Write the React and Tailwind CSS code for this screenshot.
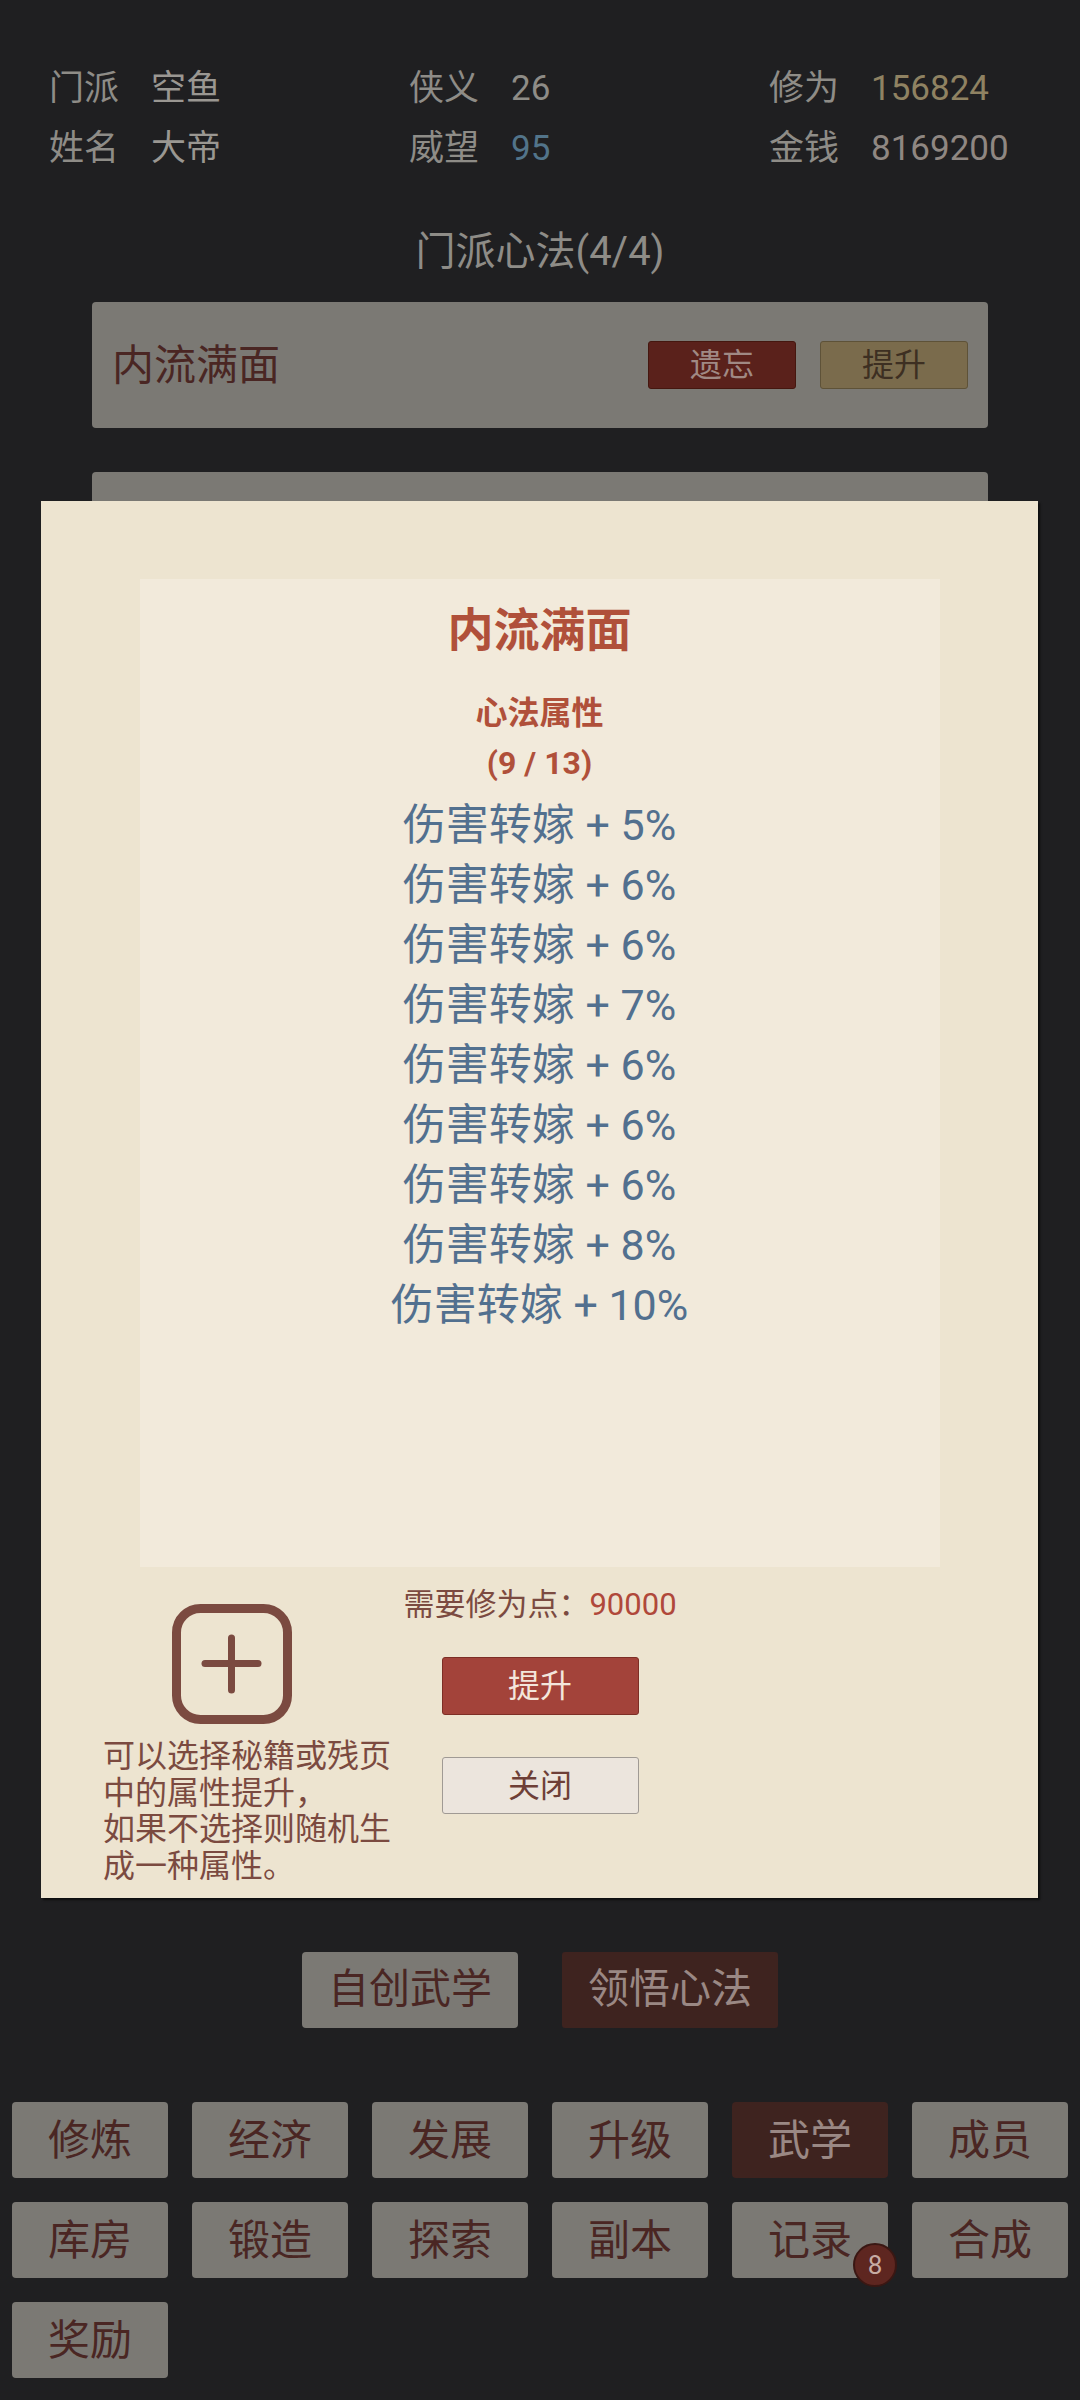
import React from "react";

const attrs = ["5%", "6%", "6%", "7%", "6%", "6%", "6%", "8%", "10%"];
const nav = [
  "修炼", "经济", "发展", "升级", "武学", "成员",
  "库房", "锻造", "探索", "副本", "记录", "合成",
  "奖励",
];

function InfoItem({ label, value, valueClass }) {
  return (
    <div className="flex w-[360px] shrink-0 items-center gap-[32px]">
      <span className="text-[#8e8c87]">{label}</span>
      <span className={valueClass}>{value}</span>
    </div>
  );
}

function Card({ name }) {
  return (
    <div className="flex h-[126px] w-[896px] shrink-0 items-center justify-between rounded-[4px] bg-[#7b7974] pl-[20px] pr-[20px]">
      <span className="text-[42px] text-[#4a2623]">{name}</span>
      <div className="flex gap-[24px]">
        <div className="flex h-[48px] w-[148px] items-center justify-center rounded-[3px] border border-[#45170f] bg-[#5a211b] text-[32px] text-[#a08984]">
          遗忘
        </div>
        <div className="flex h-[48px] w-[148px] items-center justify-center rounded-[3px] border border-[#5e5238] bg-[#7a6b4c] text-[32px] text-[#3d2f22]">
          提升
        </div>
      </div>
    </div>
  );
}

export default function App() {
  return (
    <div className="relative h-[2400px] w-[1080px] overflow-hidden bg-[#1f1f21] font-['Roboto','Noto_Sans_CJK_SC',sans-serif]">
      {/* header info */}
      <div className="pl-[49px] pt-[59px] text-[35px] leading-[60px]">
        <div className="flex">
          <InfoItem label="门派" value="空鱼" valueClass="text-[#9a9792]" />
          <InfoItem label="侠义" value="26" valueClass="text-[#8e8c87]" />
          <InfoItem label="修为" value="156824" valueClass="text-[#8f8262]" />
        </div>
        <div className="flex">
          <InfoItem label="姓名" value="大帝" valueClass="text-[#9a9792]" />
          <InfoItem label="威望" value="95" valueClass="text-[#52748a]" />
          <InfoItem label="金钱" value="8169200" valueClass="text-[#8f8782]" />
        </div>
      </div>

      <div className="mt-[43px] text-center text-[40px] leading-[60px] text-[#8e8c87]">
        门派心法(4/4)
      </div>

      {/* list */}
      <div className="mt-[20px] flex h-[1650px] flex-col items-center gap-[44px] overflow-hidden">
        <Card name="内流满面" />
        <Card name="" />
        <Card name="" />
        <Card name="" />
      </div>

      {/* bottom action buttons */}
      <div className="flex justify-center gap-[44px]">
        <div className="flex h-[76px] w-[216px] items-center justify-center rounded-[4px] bg-[#7b7974] text-[41px] text-[#4a2623]">
          自创武学
        </div>
        <div className="flex h-[76px] w-[216px] items-center justify-center rounded-[3px] bg-[#3e231f] text-[41px] text-[#9a8884]">
          领悟心法
        </div>
      </div>

      {/* nav grid */}
      <div className="mt-[74px] grid grid-cols-[repeat(6,156px)] gap-x-[24px] gap-y-[24px] px-[12px]">
        {nav.map((n) => (
          <div
            key={n}
            className={
              n === "武学"
                ? "relative flex h-[76px] items-center justify-center rounded-[4px] bg-[#3e231f] text-[42px] text-[#9a8884]"
                : "relative flex h-[76px] items-center justify-center rounded-[4px] bg-[#7b7974] text-[42px] text-[#4a2623]"
            }
          >
            {n}
            {n === "记录" && (
              <div className="absolute left-[121px] top-[41px] flex h-[44px] w-[44px] items-center justify-center rounded-full border-2 border-[#3a1713] bg-[#5e2620] text-[26px] text-[#c7aba3]">
                8
              </div>
            )}
          </div>
        ))}
      </div>

      {/* modal */}
      <div className="absolute left-[41px] top-[501px] h-[1397px] w-[997px] bg-[#ede4d0] pt-[78px] shadow-[2px_2px_2px_rgba(0,0,0,0.6)]">
        <div className="mx-auto flex h-[988px] w-[800px] flex-col items-center bg-[#f2eadb] pt-[21px]">
          <div className="text-[46px] font-bold leading-[60px] text-[#b0503a]">内流满面</div>
          <div className="mt-[28px] text-[32px] font-bold leading-[50px] text-[#b0503a]">心法属性</div>
          <div className="text-[32px] font-bold leading-[50px] text-[#b0503a]">(9 / 13)</div>
          <div className="mt-[7px] flex flex-col items-center">
            {attrs.map((a, i) => (
              <div key={i} className="whitespace-pre text-[43px] leading-[60px] text-[#52708f]">
                {"伤害转嫁 + " + a}
              </div>
            ))}
          </div>
        </div>

        <div className="mt-[18px] flex pl-[62px]">
          <div className="w-[296px] shrink-0 pt-[19px]">
            <svg width="120" height="120" viewBox="0 0 120 120" className="ml-[69px] block">
              <rect x="4.5" y="4.5" width="111" height="111" rx="24" fill="none" stroke="#7b4a40" strokeWidth="9" />
              <line x1="33" y1="59.5" x2="86" y2="59.5" stroke="#7b4a40" strokeWidth="7" strokeLinecap="round" />
              <line x1="59.5" y1="34" x2="59.5" y2="86" stroke="#7b4a40" strokeWidth="7" strokeLinecap="round" />
            </svg>
            <div className="mt-[14px] text-[32px] leading-[36.5px] text-[#7b4a40]">
              可以选择秘籍或残页中的属性提升，
              <br />
              如果不选择则随机生成一种属性。
            </div>
          </div>
          <div className="flex w-[282px] shrink-0 flex-col items-center">
            <div className="whitespace-nowrap text-[31px] leading-[40px] text-[#7b4a40]">
              需要修为点：<span className="text-[#b0483a]">90000</span>
            </div>
            <div className="mt-[32px] flex h-[58px] w-[197px] items-center justify-center rounded-[3px] border border-[#7d2e25] bg-[#a3433a] text-[32px] text-[#f3e6dc]">
              提升
            </div>
            <div className="mt-[42px] flex h-[57px] w-[197px] items-center justify-center rounded-[3px] border border-[#a09a94] bg-[#ece5dd] text-[32px] text-[#6e3f37]">
              关闭
            </div>
          </div>
        </div>
      </div>
    </div>
  );
}
